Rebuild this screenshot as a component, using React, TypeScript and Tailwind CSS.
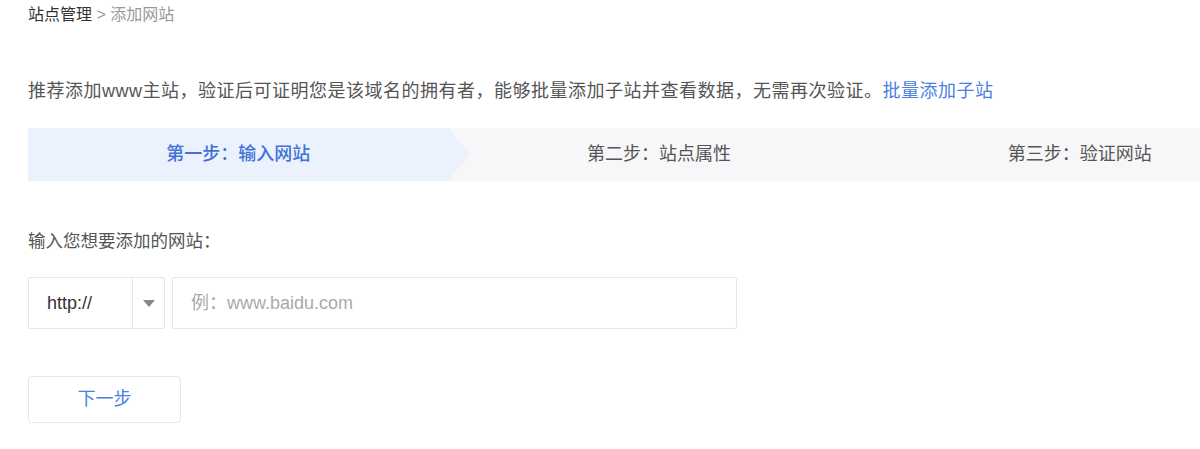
const steps = ["第一步：输入网站", "第二步：站点属性", "第三步：验证网站"]

const App = () => {
  return (
    <div className="w-[1200px] h-[449px] overflow-hidden bg-white font-['Liberation_Sans','Noto_Sans_CJK_SC',sans-serif]">
      <div className="pt-[4px] pl-[28px] text-[16px] leading-[22px]">
        <span className="text-[#333]">站点管理</span>
        <span className="text-[#999]"> &gt; 添加网站</span>
      </div>

      <p className="mt-[52px] pl-[28px] text-[18px] tracking-[0.5px] leading-[26px] text-[#555]">
        推荐添加www主站，验证后可证明您是该域名的拥有者，能够批量添加子站并查看数据，无需再次验证。
        <a className="text-[#4a7ee2]">批量添加子站</a>
      </p>

      <div className="mt-[24px] ml-[28px] w-[1262px] h-[53px] bg-[#f7f7f9] grid grid-cols-3">
        {steps.map((s, i) => (
          <div
            key={s}
            className={
              i === 0
                ? "relative flex items-center justify-center bg-[#ebf1fd] text-[#3f73d8] text-[18px] font-medium"
                : "flex items-center justify-center text-[#555] text-[18px]"
            }
          >
            {s}
            {i === 0 && (
              <span className="absolute left-full top-0 border-y-[26.5px] border-y-transparent border-l-[20px] border-l-[#ebf1fd]" />
            )}
          </div>
        ))}
      </div>

      <div className="mt-[47px] pl-[28px] text-[17.5px] leading-[26px] text-[#555]">输入您想要添加的网站：</div>

      <div className="mt-[23px] pl-[28px] flex gap-[7px]">
        <div className="w-[137px] h-[52px] flex border border-[#e6e6e9] rounded-[2px]">
          <div className="flex-1 flex items-center pl-[18px] text-[18px] text-[#333]">http://</div>
          <div className="w-[32px] border-l border-[#e6e6e9] flex items-center justify-center">
            <span className="border-x-[6px] border-x-transparent border-t-[7px] border-t-[#888]" />
          </div>
        </div>
        <div className="w-[565px] h-[52px] flex items-center pl-[18px] border border-[#e6e6e9] rounded-[2px] text-[18px] text-[#aaa]">
          例：www.baidu.com
        </div>
      </div>

      <button className="mt-[47px] ml-[28px] w-[153px] h-[47px] border border-[#e6e6e9] rounded-[4px] text-[18px] text-[#4a7ee2]">
        下一步
      </button>
    </div>
  )
}

export default App
